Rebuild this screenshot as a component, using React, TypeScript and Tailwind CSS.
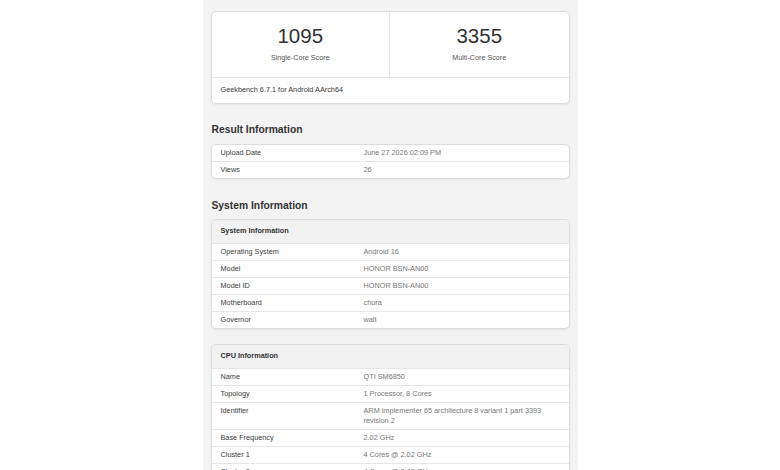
const systemRows = [
  { label: "Operating System", value: "Android 16" },
  { label: "Model", value: "HONOR BSN-AN00" },
  { label: "Model ID", value: "HONOR BSN-AN00" },
  { label: "Motherboard", value: "chora" },
  { label: "Governor", value: "walt" },
];

const cpuRows = [
  { label: "Name", value: "QTI SM6850" },
  { label: "Topology", value: "1 Processor, 8 Cores" },
  {
    label: "Identifier",
    value: "ARM implementer 65 architecture 8 variant 1 part 3393 revision 2",
  },
  { label: "Base Frequency", value: "2.02 GHz" },
  { label: "Cluster 1", value: "4 Cores @ 2.02 GHz" },
  { label: "Cluster 2", value: "4 Cores @ 2.40 GHz" },
];

type Row = { label: string; value: string };

function InfoRow({ row, first }: { row: Row; first?: boolean }) {
  return (
    <div
      className={`flex items-start py-[3.25px] px-[9px] text-[7.3px] leading-[9.5px] ${
        first ? "" : "border-t border-[#e6e6e6]"
      }`}
    >
      <div className="w-[143px] shrink-0 text-[#3a3a3a]">{row.label}</div>
      <div className="flex-1 pr-[8px] text-[#777]">{row.value}</div>
    </div>
  );
}

function Card({ children, className = "" }: { children: React.ReactNode; className?: string }) {
  return (
    <div
      className={`mx-[8px] overflow-hidden rounded-[5px] border border-[#dcdcdc] bg-white shadow-[0_1px_2px_rgba(0,0,0,0.06)] ${className}`}
    >
      {children}
    </div>
  );
}

function TableCard({ title, rows, className = "" }: { title: string; rows: Row[]; className?: string }) {
  return (
    <Card className={className}>
      <div className="flex h-[23px] items-center bg-[#f2f2f2] px-[9px] text-[7.3px] font-bold text-[#333]">
        {title}
      </div>
      {rows.map((row) => (
        <InfoRow key={row.label} row={row} />
      ))}
    </Card>
  );
}

export default function App() {
  return (
    <div
      className="h-[470px] overflow-hidden bg-white"
      style={{ fontFamily: '"Liberation Sans", Arial, sans-serif' }}
    >
      <div className="mx-auto min-h-[470px] w-[375px] bg-[#f3f3f3] pt-[11px]">
        {/* Scores */}
        <Card>
          <div className="grid h-[65px] grid-cols-2">
            <div className="flex flex-col items-center border-r border-[#e3e3e3] pt-[12px]">
              <div className="text-[20.5px] leading-[24px] text-[#333]">1095</div>
              <div className="mt-[5px] text-[7.2px] leading-[10px] text-[#555]">Single-Core Score</div>
            </div>
            <div className="flex flex-col items-center pt-[12px]">
              <div className="text-[20.5px] leading-[24px] text-[#333]">3355</div>
              <div className="mt-[5px] text-[7.2px] leading-[10px] text-[#555]">Multi-Core Score</div>
            </div>
          </div>
          <div className="flex h-[26px] items-center border-t border-[#e3e3e3] px-[9px] text-[7.3px] text-[#3a3a3a]">
            Geekbench 6.7.1 for Android AArch64
          </div>
        </Card>

        {/* Result Information */}
        <h2 className="mt-[19px] mb-[7px] px-[9px] text-[10.3px] font-bold leading-[14px] text-[#333]">
          Result Information
        </h2>
        <Card>
          <InfoRow first row={{ label: "Upload Date", value: "June 27 2026 02:09 PM" }} />
          <InfoRow row={{ label: "Views", value: "26" }} />
        </Card>

        {/* System Information */}
        <h2 className="mt-[20px] mb-[6px] px-[9px] text-[10.3px] font-bold leading-[14px] text-[#333]">
          System Information
        </h2>
        <TableCard title="System Information" rows={systemRows} />
        <TableCard title="CPU Information" rows={cpuRows} className="mt-[15px]" />
      </div>
    </div>
  );
}
